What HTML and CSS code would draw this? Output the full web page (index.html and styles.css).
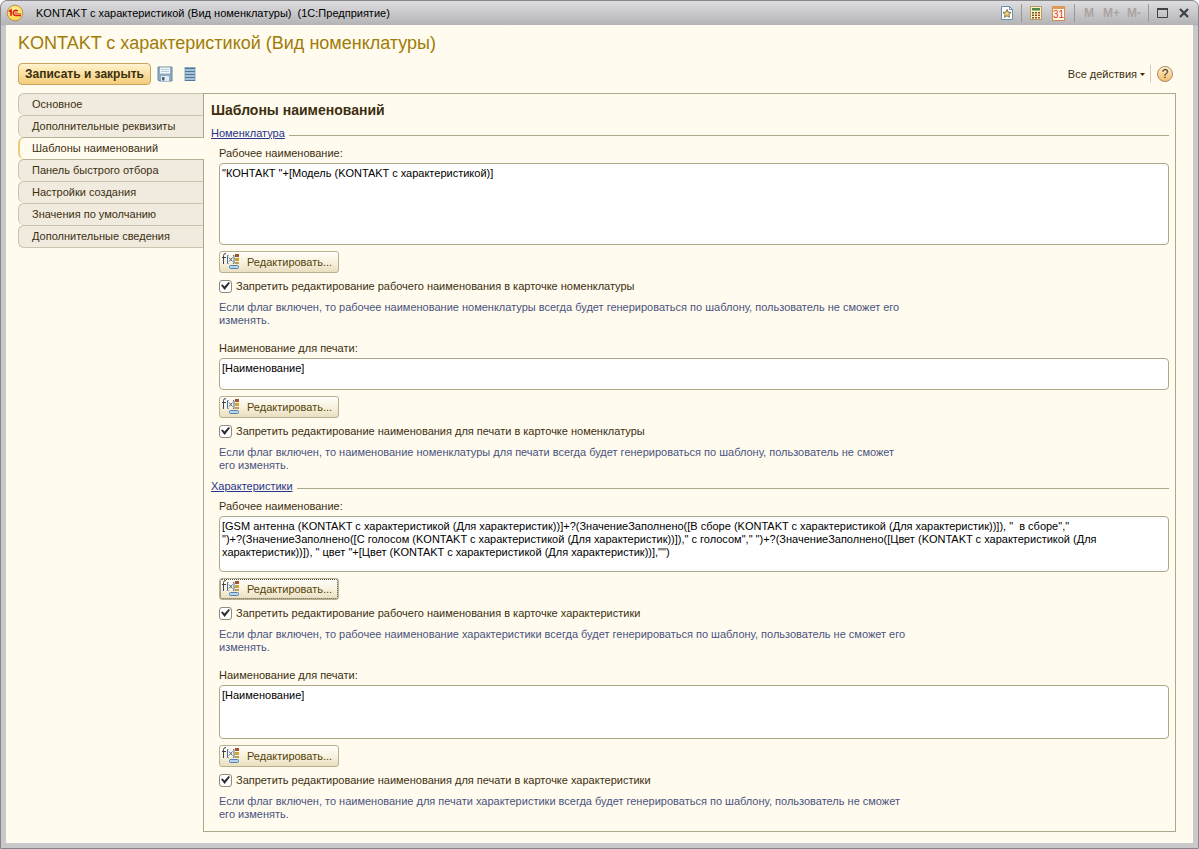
FILE: index.html
```html
<!DOCTYPE html>
<html lang="ru">
<head>
<meta charset="utf-8">
<title>KONTAKT с характеристикой (Вид номенклатуры)</title>
<link rel="stylesheet" href="styles.css">
</head>
<body>
<svg class="defs" width="0" height="0" aria-hidden="true">
  <symbol id="fx" viewBox="0 0 18 16">
    <path d="M1.500 11V2.500Q1.500 .5 4 .5M0 4.500H4" fill="none" stroke="#3c4250"/>
    <path d="M6.500 2.500H5.500V10.500H6.500M11 2.500H12V10.500H11" fill="none" stroke="#4f6f92"/>
    <path d="M7 4.500L10.500 8.500M10.500 4.500L7 8.500" stroke="#44688f"/>
    <rect x="13" y="1" width="4" height="3" fill="#a6502c"/>
    <rect x="13" y="5" width="4" height="3" fill="#d3a52e"/>
    <rect x="13" y="9" width="4" height="2" fill="#b8a050"/>
    <rect x="7.500" y="12.500" width="9" height="3" rx="1" fill="#b5d5ee" stroke="#5681ab"/>
  </symbol>
</svg>
<div class="window">
  <header class="titlebar">
    <svg class="logo" viewBox="0 0 18 18" aria-hidden="true">
      <defs><radialGradient id="lg" cx=".5" cy=".35" r=".6"><stop offset="0" stop-color="#fff6a0"/><stop offset="1" stop-color="#fbd84a"/></radialGradient></defs>
      <circle cx="9" cy="9" r="7.800" fill="url(#lg)" stroke="#c08a5a"/>
      <path d="M2.800 7.500L5 6V11.800" fill="none" stroke="#d8201c" stroke-width="1.700"/>
      <path d="M11.800 7.300A2.600 2.600 0 1 0 9.500 11.400H15" fill="none" stroke="#d8201c" stroke-width="1.500"/>
      <path d="M10.800 8.600A1 1 0 1 0 9.700 9.800H15" fill="none" stroke="#d8201c" stroke-width=".8"/>
    </svg>
    <span class="caption">KONTAKT с характеристикой (Вид номенклатуры)&nbsp; (1С:Предприятие)</span>
    <div class="tools">
      <button class="tool" aria-label="Избранное"><svg width="14" height="16" viewBox="0 0 14 16"><path d="M1.500 1.500H9.500L12.500 4.500V14.500H1.500Z" fill="#fff" stroke="#6d8fae"/><path d="M9.500 1.500V4.500H12.500" fill="none" stroke="#6d8fae"/><path d="M7 4.500L8.200 7.200L11 7.500L8.900 9.400L9.500 12.300L7 10.800L4.500 12.300L5.100 9.400L3 7.500L5.800 7.200Z" fill="#f5d27a" stroke="#75663f" stroke-width=".9"/></svg></button>
      <i class="sep"></i>
      <button class="tool" aria-label="Калькулятор"><svg width="14" height="16" viewBox="0 0 14 16"><rect x="1.500" y="1.500" width="11" height="13" fill="#fff3c4" stroke="#b49c62"/><rect x="3" y="3" width="8" height="2.500" fill="#4b8c48"/><g fill="#75552c"><path d="M3 7h2v1.500H3zM6 7h2v1.500H6zM9 7h2v1.500H9zM3 9.500h2V11H3zM6 9.500h2V11H6zM3 12h2v1.500H3zM6 12h2v1.500H6z"/></g><path d="M9 9.500h2V11H9zM9 12h2v1.500H9z" fill="#cc3c24"/></svg></button>
      <button class="tool calendar" aria-label="Календарь"><span>31</span></button>
      <i class="sep"></i>
      <button class="tool mem" disabled>M</button>
      <button class="tool mem" disabled>M+</button>
      <button class="tool mem" disabled>M-</button>
      <i class="sep"></i>
      <button class="tool" aria-label="Развернуть"><svg width="13" height="16" viewBox="0 0 13 16"><path d="M1.500 4V12.500H11.500V4" fill="none" stroke="#3f4146"/><path d="M1 4H12" stroke="#3f4146" stroke-width="2"/></svg></button>
      <button class="tool close" aria-label="Закрыть"><svg width="12" height="16" viewBox="0 0 12 16"><path d="M2 4L10 12M10 4L2 12" stroke="#3f4146" stroke-width="2.200"/></svg></button>
    </div>
  </header>
  <main class="client">
    <h1>KONTAKT с характеристикой (Вид номенклатуры)</h1>
    <div class="commands">
      <button class="primary">Записать и закрыть</button>
      <button class="icon-button" aria-label="Записать"><svg width="16" height="16" viewBox="0 0 16 16"><path d="M1 1H15V15H2L1 14Z" fill="#8fabc1" stroke="#6a8ba8"/><rect x="3" y="1.500" width="10" height="6" fill="#f2f7fa"/><path d="M4 3.500H12M4 5.500H12" stroke="#b8ccd9"/><rect x="4" y="10" width="8" height="5" fill="#e4edf3"/><rect x="5" y="11" width="2.500" height="3.500" fill="#48637c"/></svg></button>
      <button class="icon-button" aria-label="Список"><svg width="12" height="16" viewBox="0 0 12 16"><rect x="1" y="1.500" width="10" height="13" fill="#a3c2d8" stroke="#8aa9c0"/><path d="M1 2.500H11M1 5.500H11M1 8.500H11M1 11.500H11M1 14.500H11" stroke="#4f7999"/></svg></button>
      <button class="actions">Все действия<svg width="5" height="3" viewBox="0 0 5 3" aria-hidden="true"><path d="M0 0H5L2.500 3Z" fill="#3c2f10"/></svg></button>
      <i class="sep light"></i>
      <button class="help" aria-label="Справка">?</button>
    </div>
    <div class="body">
      <nav class="tabs">
        <a href="#">Основное</a>
        <a href="#">Дополнительные реквизиты</a>
        <a href="#" class="active" aria-current="page">Шаблоны наименований</a>
        <a href="#">Панель быстрого отбора</a>
        <a href="#">Настройки создания</a>
        <a href="#">Значения по умолчанию</a>
        <a href="#">Дополнительные сведения</a>
      </nav>
      <section class="panel">
        <h2>Шаблоны наименований</h2>
        <div class="group-title"><a href="#">Номенклатура</a></div>
        <div class="field">
          <label class="name" for="t1">Рабочее наименование:</label>
          <textarea id="t1" class="h-large">"КОНТАКТ "+[Модель (KONTAKT с характеристикой)]</textarea>
          <button class="edit"><svg><use href="#fx"/></svg>Редактировать...</button>
          <label class="check"><input type="checkbox" checked>Запретить редактирование рабочего наименования в карточке номенклатуры</label>
          <p class="hint">Если флаг включен, то рабочее наименование номенклатуры всегда будет генерироваться по шаблону, пользователь не сможет его<br>изменять.</p>
        </div>
        <div class="field">
          <label class="name" for="t2">Наименование для печати:</label>
          <textarea id="t2" class="h-small">[Наименование]</textarea>
          <button class="edit"><svg><use href="#fx"/></svg>Редактировать...</button>
          <label class="check"><input type="checkbox" checked>Запретить редактирование наименования для печати в карточке номенклатуры</label>
          <p class="hint">Если флаг включен, то наименование номенклатуры для печати всегда будет генерироваться по шаблону, пользователь не сможет<br>его изменять.</p>
        </div>
        <div class="group-title">
          <a href="#">Характеристики</a>
        </div>
        <div class="field">
          <label class="name" for="t3">Рабочее наименование:</label>
          <textarea id="t3" class="h-medium">[GSM антенна (KONTAKT с характеристикой (Для характеристик))]+?(ЗначениеЗаполнено([В сборе (KONTAKT с характеристикой (Для характеристик))]), "  в сборе","
")+?(ЗначениеЗаполнено([С голосом (KONTAKT с характеристикой (Для характеристик))])," с голосом"," ")+?(ЗначениеЗаполнено([Цвет (KONTAKT с характеристикой (Для
характеристик))]), " цвет "+[Цвет (KONTAKT с характеристикой (Для характеристик))],"")</textarea>
          <button class="edit focused"><svg><use href="#fx"/></svg>Редактировать...</button>
          <label class="check"><input type="checkbox" checked>Запретить редактирование рабочего наименования в карточке характеристики</label>
          <p class="hint">Если флаг включен, то рабочее наименование характеристики всегда будет генерироваться по шаблону, пользователь не сможет его<br>изменять.</p>
        </div>
        <div class="field">
          <label class="name" for="t4">Наименование для печати:</label>
          <textarea id="t4" class="h-normal">[Наименование]</textarea>
          <button class="edit"><svg><use href="#fx"/></svg>Редактировать...</button>
          <label class="check"><input type="checkbox" checked>Запретить редактирование наименования для печати в карточке характеристики</label>
          <p class="hint">Если флаг включен, то наименование для печати характеристики всегда будет генерироваться по шаблону, пользователь не сможет<br>его изменять.</p>
        </div>
      </section>
    </div>
  </main>
</div>
</body>
</html>
```
FILE: styles.css
```css
* { box-sizing: border-box; }
body {
  margin: 0;
  background: #fff;
  color: #3c2f10;
  font: 11px/13px "Liberation Sans", Arial, sans-serif;
}
button, textarea, input { font: inherit; color: inherit; margin: 0; }
button { padding: 0; border: 0; background: none; }
.defs { display: block; height: 0; }

.window {
  display: flex;
  flex-direction: column;
  min-height: 100vh;
  padding: 0 5px 5px;
  border: 1px solid #85858a;
  border-radius: 7px 7px 0 0;
  background: linear-gradient(#dedee0, #b3b3b6 24px, #c9c9cc 25px);
}
.titlebar {
  display: flex;
  align-items: center;
  height: 24px;
  color: #000;
}
.logo { width: 18px; height: 18px; }
.caption { margin-left: 12px; }
.tools {
  display: flex;
  align-items: center;
  gap: 7px;
  margin-left: auto;
}
.tool { display: flex; align-items: center; justify-content: center; }
.tool svg { display: block; }
.mem { min-width: 14px; color: #aca3a1; font-weight: bold; font-size: 12px; }
.close { margin: 0 3px 0 2px; }
.sep { width: 1px; height: 18px; background: #98989c; }
.calendar {
  width: 13px;
  height: 15px;
  padding-top: 2px;
  border: 1px solid #d78b51;
  border-top: 3px solid #e09a55;
  background: #fffbe8;
  color: #d8361c;
  font-size: 10px;
  line-height: 10px;
  margin: 0 2px;
}

.client {
  flex: 1;
  display: flex;
  flex-direction: column;
  padding: 8px 17px 11px 12px;
  background: #fffbee;
}
h1 {
  margin: 0;
  color: #a07c08;
  font-size: 18px;
  font-weight: normal;
  line-height: 21px;
}
.commands {
  display: flex;
  align-items: center;
  height: 22px;
  margin-top: 9px;
}
.primary {
  height: 22px;
  padding: 0 6px;
  border: 1px solid #c9a45c;
  border-radius: 4px;
  background: linear-gradient(#fff3d0, #fbe0a0 50%, #f3cc7c);
  font-weight: bold;
  font-size: 12px;
}
.icon-button { margin-left: 6px; }
.icon-button + .icon-button { margin-left: 11px; }
.icon-button svg { display: block; }
.actions { display: flex; align-items: center; gap: 3px; margin-left: auto; }
.light { margin: 0 6px 0 5px; background: #d5cdb4; }
.help {
  width: 16px;
  height: 16px;
  margin-right: 3px;
  border: 1px solid #b08a5c;
  border-radius: 50%;
  background: linear-gradient(#fff0d0, #f3bc6c);
  font-size: 12px;
  line-height: 14px;
}

.body { flex: 1; display: flex; margin-top: 8px; }
.tabs { width: 185px; }
.tabs a {
  display: block;
  height: 22px;
  padding: 0 13px;
  border: 1px solid #c9c3ae;
  border-width: 1px 0 0 1px;
  border-radius: 6px 0 0 6px;
  background: #f0ebde;
  color: inherit;
  line-height: 21px;
  text-decoration: none;
}
.tabs a:last-child { height: 23px; border-bottom-width: 1px; }
.tabs .active {
  position: relative;
  width: 186px;
  border-color: #b8b298;
  border-left: 2px solid #f0c878;
  padding-left: 12px;
  background: #fffbee;
}
.tabs .active + a { border-top-color: #b8b298; }

.panel {
  flex: 1;
  min-width: 0;
  padding: 8px 6px 9px 7px;
  border: 1px solid #aca98a;
}
h2 {
  margin: 0;
  font-size: 14px;
  line-height: 17px;
}
.group-title {
  display: flex;
  align-items: center;
  gap: 4px;
  height: 20px;
  margin-top: 4px;
}
.group-title a { color: #26348c; }
.group-title::after {
  content: "";
  flex: 1;
  height: 1px;
  margin-top: 4px;
  background: #a9a78c;
}
.field {
  display: flex;
  flex-direction: column;
  align-items: flex-start;
  padding-left: 8px;
}
.field + .field { margin-top: 11px; }
.name { line-height: 20px; }
textarea {
  width: 100%;
  padding: 3px 2px;
  border: 1px solid #aca98a;
  border-radius: 4px;
  background: #fff;
  color: #000;
  resize: none;
  overflow: hidden;
}
.h-large { height: 82px; }
.h-small { height: 32px; }
.h-medium { height: 56px; }
.h-normal { height: 54px; }
.edit {
  display: flex;
  align-items: center;
  width: 120px;
  height: 22px;
  margin-top: 6px;
  border: 1px solid #b9b18e;
  border-radius: 3px;
  background: linear-gradient(#fffef9, #f8f2df 50%, #e9dfc0);
  color: #55430a;
}
.edit svg { width: 18px; height: 16px; margin: 0 7px 2px 2px; }
.focused { outline: 1px dotted #4d4a40; outline-offset: -2px; }
.check { display: flex; align-items: center; height: 26px; }
.check input {
  appearance: none;
  width: 13px;
  height: 13px;
  margin-right: 4px;
  border: 1px solid #8d8b7c;
  border-radius: 3px;
  background: #fff;
  display: grid;
  place-items: center;
}
.check input:checked::before {
  content: "";
  width: 9px;
  height: 8px;
  background: #2c2c30;
  clip-path: polygon(0 42%, 18% 30%, 38% 56%, 85% 0, 100% 14%, 40% 100%);
}
.hint { margin: 2px 0 0; color: #4a5380; }
```
